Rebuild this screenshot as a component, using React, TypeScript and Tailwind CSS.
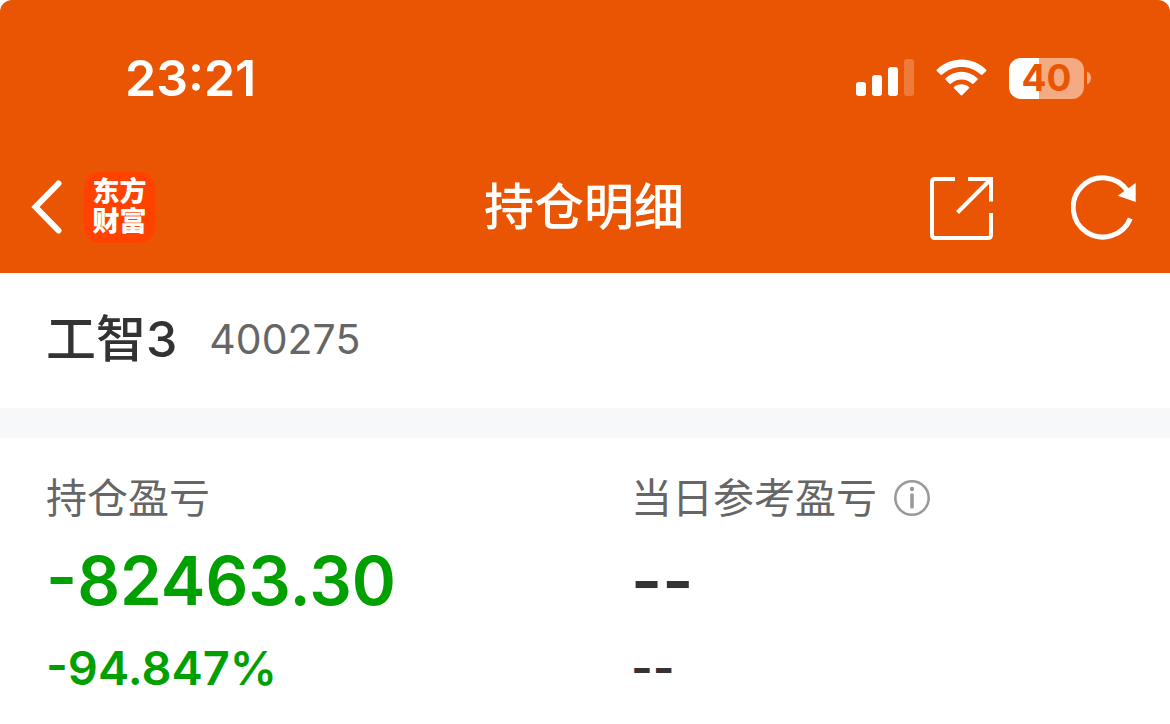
import type { ReactNode } from "react";

function SignalIcon() {
  return (
    <svg width="58" height="38" viewBox="0 0 58 38" fill="#fff" aria-hidden="true">
      <rect x="0" y="23" width="10" height="14" rx="3" />
      <rect x="16" y="16" width="10" height="21" rx="3" />
      <rect x="32" y="8" width="10" height="29" rx="3" />
      <rect x="48" y="0" width="10" height="37" rx="3" opacity="0.22" />
    </svg>
  );
}

function WifiIcon() {
  return (
    <svg width="51" height="38" viewBox="0 0 51.6 38" fill="#fff" aria-hidden="true">
      <path d="M0.8 10.6Q0.2 11.2 0.8 11.8L4.8 15.8Q5.4 16.3 6 15.8C17.2 5.1 34.4 5.1 45.6 15.8Q46.2 16.3 46.8 15.8L50.8 11.8Q51.4 11.2 50.8 10.6C36.8 -3.2 14.8 -3.2 0.8 10.6Z" />
      <path d="M9.5 19.4Q8.9 20 9.5 20.6L13.7 24.8Q14.3 25.3 14.9 24.8C21.2 19 30.4 19 36.7 24.8Q37.3 25.3 37.9 24.8L42.1 20.6Q42.7 20 42.1 19.4C32.8 10.6 18.8 10.6 9.5 19.4Z" />
      <path d="M18.2 28.2Q17.6 28.8 18.2 29.4L25.2 36.5Q25.8 37 26.4 36.5L33.4 29.4Q34 28.8 33.4 28.2C29 24.4 22.6 24.4 18.2 28.2Z" />
    </svg>
  );
}

function Battery() {
  return (
    <div className="flex items-center gap-[3px]">
      <div className="flex h-[41px] w-[75px] items-center justify-center rounded-xl bg-linear-to-r from-white from-40% to-[#f5ab82] to-40% text-[37px] font-bold text-[#ea5504]">
        40
      </div>
      <svg width="4" height="14" viewBox="0 0 4 14" fill="#f5ab82" aria-hidden="true">
        <path d="M0 0.5C5.3 2.6 5.3 11.4 0 13.5Z" />
      </svg>
    </div>
  );
}

function BackIcon() {
  return (
    <svg width="32" height="54" viewBox="0 0 32 54" fill="none" stroke="#fff" strokeWidth="6" strokeLinecap="round" strokeLinejoin="miter">
      <path d="M27.5 3.5L4.5 27L27.5 50.5" />
    </svg>
  );
}

function ShareIcon() {
  return (
    <svg width="64" height="66" viewBox="0 -3 64 66" fill="none" stroke="#fff" strokeWidth="4">
      <path d="M25 2H5Q2 2 2 5V58Q2 61 5 61H58Q61 61 61 58V36" />
      <path d="M38 2H61V24.5M61 2L27.5 35.5" />
    </svg>
  );
}

function RefreshIcon() {
  return (
    <svg width="66" height="66" viewBox="0 0 66 66" fill="none">
      <path d="M56.5 17A29.6 29.6 0 1 0 59.3 44.5" stroke="#fff" strokeWidth="5" />
      <path d="M64.7 9L46.7 21.7L64.7 28Z" fill="#fff" />
    </svg>
  );
}

function InfoIcon() {
  return (
    <svg width="36" height="36" viewBox="0 0 36 36" fill="none">
      <circle cx="18" cy="18" r="16.7" stroke="#999" strokeWidth="2.6" />
      <circle cx="18" cy="9" r="2.2" fill="#999" />
      <path d="M18 15V27" stroke="#999" strokeWidth="3.6" strokeLinecap="round" />
    </svg>
  );
}

type ProfitProps = {
  label: string;
  amount: string;
  rate: string;
  color: string;
  extra?: ReactNode;
};

function Profit({ label, amount, rate, color, extra }: ProfitProps) {
  return (
    <div className="px-[46px]">
      <dt className="flex items-center gap-[17px] text-[41px] leading-[60px] text-[#666]">
        {label}
        {extra}
      </dt>
      <dd className={`mt-3 text-[67px] leading-[82px] font-semibold ${color}`}>{amount}</dd>
      <dd className={`mt-4 text-[47px] leading-[60px] font-semibold ${color}`}>{rate}</dd>
    </div>
  );
}

export default function App() {
  return (
    <div className="min-h-screen bg-white font-['Inter','Noto_Sans_CJK_SC',sans-serif]">
      <header className="rounded-t-xl bg-[#ea5504] text-white">
        <div className="flex items-center justify-between pt-12 pr-[79px] pl-[125px]">
          <time className="text-[50px] leading-[60px] font-semibold">23:21</time>
          <div className="flex items-center gap-[22px]">
            <SignalIcon />
            <WifiIcon />
            <Battery />
          </div>
        </div>
        <div className="grid grid-cols-[1fr_auto_1fr] items-center pt-[61px] pr-[33px] pb-7 pl-[31px]">
          <div className="flex items-center gap-[21px]">
            <button type="button" aria-label="返回">
              <BackIcon />
            </button>
            <a
              href="#"
              className="flex size-[71px] flex-col items-center justify-center rounded-2xl bg-[#ff4200] text-[27px] leading-[30px] font-black"
            >
              <span>东方</span>
              <span>财富</span>
            </a>
          </div>
          <h1 className="text-[50px] leading-[76px] font-medium">持仓明细</h1>
          <div className="flex items-center justify-end gap-[77px]">
            <button type="button" aria-label="分享">
              <ShareIcon />
            </button>
            <button type="button" aria-label="刷新">
              <RefreshIcon />
            </button>
          </div>
        </div>
      </header>

      <main>
        <section className="flex items-center gap-8 border-b-[30px] border-[#f7f8fa] px-[46px] pt-9 pb-[39px]">
          <h2 className="text-[50px] leading-[60px] font-medium text-[#333]">工智3</h2>
          <span className="text-[41px] leading-[60px] text-[#666]">400275</span>
        </section>

        <dl className="grid grid-cols-2 pt-[30px]">
          <Profit label="持仓盈亏" amount="-82463.30" rate="-94.847%" color="text-[#00a000]" />
          <Profit
            label="当日参考盈亏"
            amount="--"
            rate="--"
            color="text-[#333]"
            extra={
              <button type="button" aria-label="说明">
                <InfoIcon />
              </button>
            }
          />
        </dl>
      </main>
    </div>
  );
}
